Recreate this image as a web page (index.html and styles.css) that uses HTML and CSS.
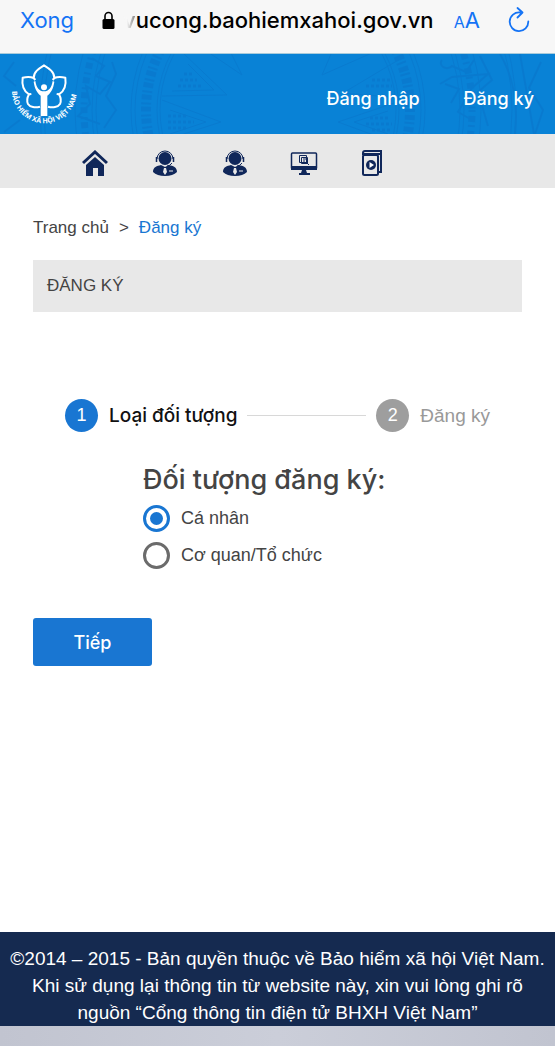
FILE: index.html
```html
<!DOCTYPE html>
<html lang="vi">
<head>
<meta charset="utf-8">
<meta name="viewport" content="width=device-width, initial-scale=1">
<title>Đăng ký</title>
<link rel="stylesheet" href="styles.css">
</head>
<body>
<div class="browser-bar">
  <button class="done" type="button">Xong</button>
  <div class="address">
    <svg class="lock" viewBox="0 0 13 18" aria-hidden="true"><path d="M3 9V5a3.5 3.5 0 0 1 7 0v4" fill="none" stroke="#000" stroke-width="1.6"/><rect x="0.5" y="8" width="12" height="10" rx="1.5"/></svg>
    <span class="host"><span class="faded">v</span>ucong.baohiemxahoi.gov.vn</span>
  </div>
  <button class="text-size" type="button"><span class="small-a">A</span>A</button>
  <button class="reload" type="button" aria-label="Tải lại">
    <svg viewBox="0 0 22 26" aria-hidden="true"><path d="M12 5.500A9.300 9.300 0 1 0 20.300 14.500M9.500 1l5 4.500-5 5" fill="none" stroke="#1473f5" stroke-width="1.800" stroke-linecap="round" stroke-linejoin="round"/></svg>
  </button>
</div>

<header class="banner">
  <svg class="pattern" viewBox="0 0 555 80" preserveAspectRatio="xMidYMid slice" aria-hidden="true">
    <g fill="none" stroke="#0a70c5" stroke-width="1">
      <circle cx="278" cy="56" r="118"/>
      <circle cx="278" cy="56" r="121"/>
      <circle cx="278" cy="56" r="132" stroke-width="10" stroke-dasharray="2 3 5 2"/>
      <circle cx="278" cy="56" r="143"/>
      <circle cx="278" cy="56" r="147"/>
      <circle cx="278" cy="56" r="182"/>
      <circle cx="278" cy="56" r="186"/>
      <circle cx="278" cy="56" r="194" stroke-width="7" stroke-dasharray="2 4 6 3"/>
      <circle cx="278" cy="56" r="203"/>
      <circle cx="278" cy="56" r="234"/>
      <circle cx="278" cy="56" r="238"/>
      <path d="M182-2l45 43-65 1M188 10l26 26-42 1M162 46l59 22-59 19M170 56l36 12-36 12M205-4l37 25-14-28M374-2l-52 23 12-28M400 5l-57 34 58 5M397 48l-59 20 60 22M388 57l-34 11 34 12"/>
      <path d="M178 32l24 0M180 26l17 0M184 20l10 0M168 62h20M168 68h26M168 74h20M366 32h26M372 26h20M370 64h20M366 70h26M372 76h18" stroke-width="3" stroke-dasharray="3 2"/>
      <path d="M92 4l12 8-8 10 14 6-10 12-14-8 4 18-12 12 22 8M112 8l4 12-10 22 10 14-12 18M442 6a6 5 0 1 0 10 6l14 6 8-12M440 30l12-7 36-3-16 14-14 24 14 8M445 30l14 5-8 14M480 2l12 24-14 12 10 34M500 0q20 34 15 80M520 0l14 80M541 8l-12 26 14 22-8 24M14 8l-10 14 12 10M20 66l-16 12" stroke-width="2"/>
    </g>
  </svg>
  <a class="logo" href="#" aria-label="Bảo hiểm xã hội Việt Nam">
    <svg viewBox="36 26 195 195">
      <defs><path id="ring" d="M36 114A97 97 0 0 0 230 111"/></defs>
      <path d="M120 160C106 164 90 162 84 152Q78 139 87 123C70 113 65 94 68 73C80 70 92 70 101 74C101 56 116 46 132 36C148 46 163 56 163 74C172 70 184 70 196 73C199 94 194 113 177 123Q186 139 180 152C174 162 158 164 144 160" fill="none" stroke="#fff" stroke-width="6" stroke-linejoin="round"/>
      <path d="M101 74L106 80M163 74L158 80M87 123L94 122M177 123L170 122" stroke="#fff" stroke-width="6" fill="none"/>
      <circle cx="132" cy="102" r="9" fill="#fff"/>
      <path d="M106 83C109 103 118 114 132 114C146 114 155 103 158 83L163 85C160 107 152 119 142 127V188H122V127C112 119 104 107 101 85Z" fill="#fff"/>
      <text class="ring-text"><textPath href="#ring">BẢO HIỂM XÃ HỘI VIỆT NAM</textPath></text>
    </svg>
  </a>
  <nav class="account"><a href="#">Đăng nhập</a><a href="#">Đăng ký</a></nav>
</header>

<nav class="shortcuts" aria-label="Điều hướng">
  <a href="#" aria-label="Trang chủ"><svg viewBox="0 0 26 26"><path d="M1 13L13 2l12 11" fill="none" stroke="#10275a" stroke-width="3"/><path d="M4 15l9-8 9 8v11h-6v-8h-5v8H4z" fill="#10275a"/></svg></a>
  <a href="#" aria-label="Hỗ trợ"><svg viewBox="0 0 26 26"><use href="#agent"/></svg></a>
  <a href="#" aria-label="Tư vấn"><svg viewBox="0 0 26 26"><g id="agent"><circle cx="13" cy="8.500" r="6.500" fill="#10275a"/><path d="M5 9a8 8 0 1 1 16 0M20 13q-2 3-5 3" fill="none" stroke="#10275a"/><path d="M4.500 7v5M21.500 7v5" stroke="#10275a" stroke-width="1.500"/><path d="M1 22C1 17 5 16 9 15l4 2 4-2c4 1 8 2 8 7Q21 26 13 26T1 22z" fill="#10275a"/><path d="M12 18h2l1 4-2 3-2-3zM17 20.500h4v1h-4z" fill="#e8e8e8"/></g></svg></a>
  <a href="#" aria-label="Tra cứu"><svg class="screen" viewBox="0 0 28 26"><rect x="1.500" y="3" width="25" height="16" rx="1" fill="none" stroke="#10275a" stroke-width="1.500"/><path d="M1 16h26v4H1zM12 20h4l1 3h3v2H9v-2h2z" fill="#10275a"/><path d="M9.500 5.500h7v7h-7zM11.500 7.500h6v6h-6zM13 9h3M13 11h2M16 12l3 3" fill="none" stroke="#10275a"/></svg></a>
  <a href="#" aria-label="Hướng dẫn"><svg viewBox="0 0 26 26"><path d="M3 5V3q0-2 2-2h16v21h-2M3 4h17" fill="none" stroke="#10275a" stroke-width="2"/><rect x="3" y="5" width="15" height="20" rx="1.500" fill="#e8e8e8" stroke="#10275a" stroke-width="2"/><circle cx="11" cy="15" r="5" fill="#10275a"/><path d="M9.500 12l4.500 3-4.500 3z" fill="#fff"/></svg></a>
</nav>

<main class="content">
  <nav class="crumbs" aria-label="Đường dẫn"><a href="#">Trang chủ</a><span>&gt;</span><a class="current" href="#">Đăng ký</a></nav>
  <h1 class="title">ĐĂNG KÝ</h1>
  <ol class="steps">
    <li class="step active"><span class="number">1</span>Loại đối tượng</li>
    <li class="line" aria-hidden="true"></li>
    <li class="step"><span class="number">2</span>Đăng ký</li>
  </ol>
  <form class="form">
    <fieldset class="choices">
      <legend>Đối tượng đăng ký:</legend>
      <label><input type="radio" name="subject" checked>Cá nhân</label>
      <label><input type="radio" name="subject">Cơ quan/Tổ chức</label>
    </fieldset>
    <button class="next" type="button">Tiếp</button>
  </form>
</main>

<footer class="footer">©2014 – 2015 - Bản quyền thuộc về Bảo hiểm xã hội Việt Nam. Khi sử dụng lại thông tin từ website này, xin vui lòng ghi rõ nguồn “Cổng thông tin điện tử BHXH Việt Nam”</footer>
<div class="toolbar"></div>
</body>
</html>
```
FILE: styles.css
```css
* { box-sizing: border-box; }

body {
  margin: 0;
  min-height: 100vh;
  display: flex;
  flex-direction: column;
  background: #fff;
  color: #444;
  font-family: "Liberation Sans", Arial, sans-serif;
  font-size: 18px;
}

a { color: inherit; text-decoration: none; }
button { border: 0; padding: 0; background: none; font: inherit; }
svg { display: block; }

.browser-bar {
  display: flex;
  align-items: center;
  height: 54px;
  padding: 0 25px 13px 20px;
  background: #f7f7f7;
  border-bottom: 1px solid #a9cbdb;
  font-family: Inter, sans-serif;
}
.done { color: #1473f5; font-size: 22px; }
.address {
  flex: 1;
  display: flex;
  align-items: center;
  gap: 8px;
  margin-left: 28px;
  color: #000;
  font-size: 22px;
  font-weight: 500;
  white-space: nowrap;
}
.lock { width: 13px; height: 18px; }
.faded {
  color: transparent;
  background: linear-gradient(90deg, #f7f7f7 30%, #777);
  background-clip: text;
}
.text-size { color: #1473f5; font-size: 22px; }
.small-a { font-size: 16px; }
.reload { margin-left: 28px; }
.reload svg { width: 22px; height: 26px; }

.banner {
  position: relative;
  display: flex;
  align-items: center;
  justify-content: space-between;
  height: 80px;
  padding: 0 21px 0 12px;
  background: #0982d6;
  color: #fff;
}
.pattern {
  position: absolute;
  inset: 0;
  width: 100%;
  height: 100%;
  opacity: 0.4;
}
.logo, .account { position: relative; }
.logo svg { width: 65px; height: 65px; overflow: visible; }
.ring-text {
  fill: #fff;
  font-family: "Open Sans", sans-serif;
  font-size: 21px;
  font-weight: 700;
}
.account {
  display: flex;
  gap: 44px;
  padding-top: 8px;
  font-family: Inter, sans-serif;
  font-weight: 500;
}

.shortcuts {
  display: flex;
  align-items: center;
  gap: 44px;
  height: 54px;
  padding: 4px 82px 0;
  background: #e8e8e8;
}
.shortcuts svg { width: 26px; height: 26px; }
.shortcuts .screen { width: 28px; margin: 0 -2px; }

.content { flex: 1; padding: 28px 33px 0; }
.crumbs {
  display: flex;
  gap: 10px;
  font-size: 17px;
  line-height: 24px;
}
.current { color: #1976d2; }
.title {
  margin: 20px 0 0;
  padding: 0 14px;
  background: #e8e8e8;
  font-size: 17px;
  font-weight: 400;
  line-height: 52px;
}

.steps {
  display: flex;
  align-items: center;
  gap: 10px;
  margin: 87px 0 0;
  padding: 0 32px;
  list-style: none;
  font-size: 19px;
}
.step { display: flex; align-items: center; gap: 11px; color: #999; }
.active { color: #111; font-family: Inter, sans-serif; font-weight: 500; }
.line { flex: 1; height: 1px; background: #d8d8d8; }
.number {
  width: 33px;
  height: 33px;
  border-radius: 50%;
  background: #9e9e9e;
  color: #fff;
  font-family: "Liberation Sans", Arial, sans-serif;
  font-size: 18px;
  font-weight: 400;
  line-height: 33px;
  text-align: center;
}
.active .number { background: #1976d2; }

.choices { margin: 30px 0 0; padding: 0 0 0 110px; border: 0; }
.choices legend {
  padding: 0 0 2px;
  font-family: Inter, sans-serif;
  font-size: 27px;
  font-weight: 500;
  line-height: 36px;
}
.choices label {
  display: flex;
  align-items: center;
  gap: 11px;
  height: 37px;
}
.choices input {
  appearance: none;
  width: 27px;
  height: 27px;
  margin: 0;
  border: 3px solid #6b6b6b;
  border-radius: 50%;
}
.choices input:checked {
  padding: 4px;
  border-color: #1976d2;
  background: #1976d2 content-box;
}

.next {
  margin-top: 44px;
  width: 119px;
  height: 48px;
  border-radius: 3px;
  background: #1976d2;
  color: #fff;
  font-family: Inter, sans-serif;
  font-weight: 500;
}

.footer {
  padding: 13px 8px 0;
  background: #152a50;
  color: #fff;
  font-size: 19px;
  line-height: 27px;
  text-align: center;
}
.toolbar {
  height: 20px;
  background: linear-gradient(90deg, #c1c4d0, #cbced9 50%, #c1c4d0);
}
```
